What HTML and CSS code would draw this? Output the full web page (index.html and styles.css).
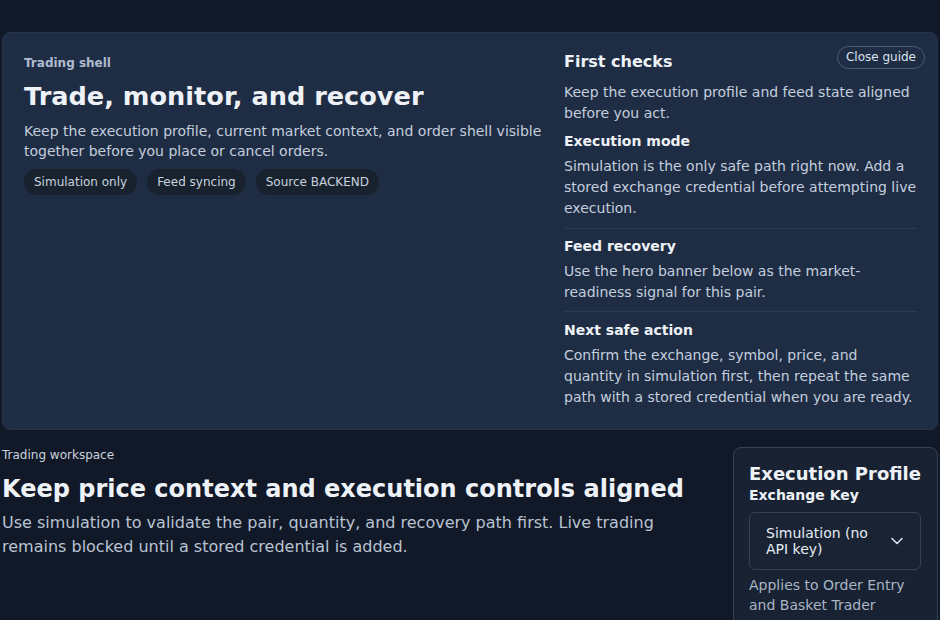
FILE: index.html
```html
<!DOCTYPE html>
<html>
<head>
<meta charset="utf-8">
<link rel="stylesheet" href="styles.css">
</head>
<body>
<div class="page">
  <section class="guide">
    <div class="guide-main">
      <div class="eyebrow">Trading shell</div>
      <h1 class="guide-title">Trade, monitor, and recover</h1>
      <p class="guide-lead">Keep the execution profile, current market context, and order shell visible together before you place or cancel orders.</p>
      <div class="chips">
        <span class="chip">Simulation only</span>
        <span class="chip">Feed syncing</span>
        <span class="chip">Source BACKEND</span>
      </div>
    </div>
    <div class="guide-side">
      <h2 class="side-title">First checks</h2>
      <p class="side-lead">Keep the execution profile and feed state aligned before you act.</p>
      <div class="check">
        <h3 class="check-title">Execution mode</h3>
        <p class="check-text">Simulation is the only safe path right now. Add a stored exchange credential before attempting live execution.</p>
      </div>
      <div class="check">
        <h3 class="check-title">Feed recovery</h3>
        <p class="check-text">Use the hero banner below as the market-readiness signal for this pair.</p>
      </div>
      <div class="check">
        <h3 class="check-title">Next safe action</h3>
        <p class="check-text">Confirm the exchange, symbol, price, and quantity in simulation first, then repeat the same path with a stored credential when you are ready.</p>
      </div>
    </div>
    <button class="close-btn">Close guide</button>
  </section>

  <section class="workspace">
    <div class="ws-main">
      <div class="ws-eyebrow">Trading workspace</div>
      <h2 class="ws-title">Keep price context and execution controls aligned</h2>
      <p class="ws-lead">Use simulation to validate the pair, quantity, and recovery path first. Live trading remains blocked until a stored credential is added.</p>
    </div>
    <aside class="profile">
      <h3 class="profile-title">Execution Profile</h3>
      <div class="profile-label">Exchange Key</div>
      <div class="select">
        <span class="select-text">Simulation (no API key)</span>
        <svg class="chev" width="12" height="8" viewBox="0 0 12 8"><path d="M1 1.5 L6 6.5 L11 1.5" fill="none" stroke="#dfe6ef" stroke-width="1.5" stroke-linecap="round" stroke-linejoin="round"/></svg>
      </div>
      <p class="profile-note">Applies to Order Entry and Basket Trader</p>
    </aside>
  </section>
</div>
</body>
</html>
```

FILE: styles.css
```css
* { box-sizing: border-box; }
html, body {
  margin: 0;
  padding: 0;
  background: #111827;
  height: 100%;
  overflow: hidden;
}
body {
  font-family: "DejaVu Sans", "Liberation Sans", sans-serif;
  color: #e5ebf3;
}
.page {
  padding: 32px 2px 0 2px;
}
.guide {
  position: relative;
  display: grid;
  grid-template-columns: 1fr 353px;
  column-gap: 22px;
  align-items: start;
  background: #1f2d44;
  border: 1px solid #26344b;
  border-radius: 8px;
  padding: 21px 20px 21px 21px;
}
.eyebrow {
  margin-top: 1px;
  font-size: 12px;
  font-weight: bold;
  color: #aebbd0;
  line-height: 16px;
}
.guide-title {
  margin: 9px 0 0;
  font-size: 25.6px;
  line-height: 32px;
  font-weight: bold;
  color: #eef2f7;
}
.guide-lead {
  margin: 9px 0 0;
  font-size: 14px;
  line-height: 20px;
  color: #c3cede;
}
.chips {
  display: flex;
  gap: 10px;
  margin-top: 8px;
}
.chip {
  background: #17222e;
  color: #c8d2de;
  font-size: 12px;
  line-height: 26px;
  padding: 0 10px;
  border-radius: 13px;
}
.side-title {
  margin: -1px 0 0;
  font-size: 16px;
  line-height: 18px;
  font-weight: bold;
  color: #eef2f7;
}
.side-lead {
  margin: 11px 0 0;
  font-size: 14px;
  line-height: 21px;
  color: #c3cede;
}
.check {
  padding: 8px 0 9px;
}
.check + .check {
  border-top: 1px solid #2c3b53;
  padding-top: 8px;
}
.check:nth-child(4) { padding-bottom: 8px; }
.check:last-child { padding-top: 9px; padding-bottom: 0; }
.check-title {
  margin: 0;
  font-size: 14px;
  line-height: 18px;
  font-weight: bold;
  color: #eef2f7;
}
.check-text {
  margin: 6px 0 0;
  font-size: 14px;
  line-height: 21px;
  color: #c3cede;
}
.close-btn {
  position: absolute;
  top: 13px;
  right: 12px;
  background: transparent;
  border: 1px solid #4b5b73;
  border-radius: 12px;
  color: #dbe3ee;
  font-family: "DejaVu Sans", sans-serif;
  font-size: 12px;
  line-height: 21px;
  padding: 0 8px;
}
.workspace {
  display: flex;
  justify-content: space-between;
  align-items: flex-start;
  margin-top: 17px;
}
.ws-main {
  max-width: 710px;
}
.ws-eyebrow {
  font-size: 12px;
  line-height: 16px;
  color: #cbd3de;
}
.ws-title {
  margin: 11px 0 0;
  font-size: 24px;
  line-height: 30px;
  font-weight: bold;
  color: #eef2f7;
}
.ws-lead {
  margin: 7px 0 0;
  font-size: 16px;
  line-height: 24px;
  color: #b9c4d3;
  max-width: 680px;
}
.profile {
  width: 205px;
  background: #182233;
  border: 1px solid #334257;
  border-radius: 8px;
  padding: 15px 16px 16px 15px;
}
.profile-title {
  margin: 0;
  font-size: 18px;
  line-height: 22px;
  font-weight: bold;
  color: #eef2f7;
  white-space: nowrap;
}
.profile-label {
  font-size: 14px;
  font-weight: bold;
  line-height: 20px;
  color: #eef2f7;
}
.select {
  margin-top: 7px;
  display: flex;
  align-items: center;
  justify-content: space-between;
  border: 1px solid #33425a;
  border-radius: 6px;
  background: #192333;
  padding: 0 17px 0 16px;
  height: 58px;
}
.select-text {
  font-size: 14px;
  line-height: 16px;
  color: #e5ebf3;
  max-width: 120px;
}
.chev { flex: none; }
.profile-note {
  margin: 5px 0 0;
  font-size: 14px;
  line-height: 20px;
  color: #aab5c5;
}
```
